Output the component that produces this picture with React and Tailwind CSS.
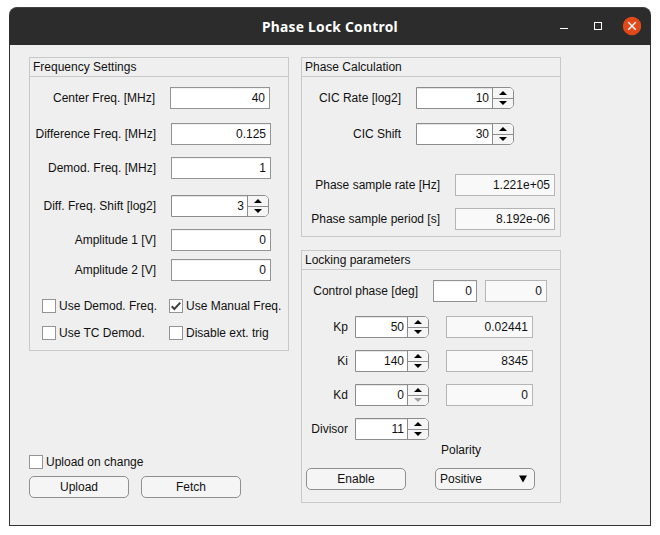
const FONT = "font-['Liberation_Sans',Arial,sans-serif]";

function Panel({ title, className, children }) {
  return (
    <section className={`w-[260px] border border-[#c9c9c9] ${className}`}>
      <h2 className="h-[19px] border-b border-[#c9c9c9] pl-[3px] leading-[18px]">{title}</h2>
      {children}
    </section>
  );
}

function Row({ label, labelWidth, gap = 'gap-[15px]', className = '', children }) {
  return (
    <div className={`flex h-[22px] items-center ${gap} ${className}`}>
      <label className={`shrink-0 text-right whitespace-nowrap ${labelWidth}`}>{label}</label>
      {children}
    </div>
  );
}

function Field({ value, width = 'w-[100px]', className = '' }) {
  return (
    <div className={`h-[22px] shrink-0 border border-[#949494] bg-white pr-1 text-right leading-[20px] shadow-[inset_0_1px_0_#f1f1f1] ${width} ${className}`}>
      {value}
    </div>
  );
}

function ReadOnly({ value, width = 'w-[100px]', className = '' }) {
  return (
    <div className={`h-[22px] shrink-0 border border-[#b5b5b5] bg-[#f9f9f9] pr-1 text-right leading-[20px] ${width} ${className}`}>
      {value}
    </div>
  );
}

function Spinner({ value, width, downDisabled = false }) {
  return (
    <div className={`flex h-[22px] shrink-0 overflow-hidden rounded-r-[5px] border border-[#8c8c8c] bg-white ${width}`}>
      <span className="flex-1 pr-[3px] text-right leading-[20px] shadow-[inset_0_1px_0_#e4e4e4]">{value}</span>
      <span className="flex w-[21px] flex-col border-l border-[#8c8c8c] bg-[#f5f5f5]">
        <span className="flex h-[11px] justify-center border-b border-[#8c8c8c] pt-[3px]">
          <svg width="8" height="4" viewBox="0 0 8 4"><path d="M0 4L4 0L8 4Z" fill="#000" /></svg>
        </span>
        <span className="flex h-[9px] justify-center pt-[2px]">
          <svg width="8" height="4" viewBox="0 0 8 4"><path d="M0 0L4 4L8 0Z" fill={downDisabled ? '#a0a0a0' : '#000'} /></svg>
        </span>
      </span>
    </div>
  );
}

function Check({ label, checked = false, className = '' }) {
  return (
    <div className={`flex h-[14px] items-center gap-[3px] whitespace-nowrap ${className}`}>
      <span className="flex size-[14px] shrink-0 items-center justify-center border border-[#949494] bg-white">
        {checked && (
          <svg width="12" height="12" viewBox="0 0 12 12">
            <path d="M1.7 6.2L4.4 9L10.3 2.6" fill="none" stroke="#3f3f3f" strokeWidth="2" />
          </svg>
        )}
      </span>
      <span>{label}</span>
    </div>
  );
}

function Button({ children }) {
  return (
    <button className="h-[22px] w-[100px] rounded-[5px] border border-[#8f8f8f] bg-[#f5f5f5] text-center leading-[20px]">
      {children}
    </button>
  );
}

function TitleBar() {
  return (
    <header className="grid h-[38px] grid-cols-[1fr_auto_1fr] items-center rounded-t-[8px] border-t border-[#424242] bg-[#2c2c2c]">
      <span />
      <h1 className="w-[136px] font-['Noto_Sans','Open_Sans',sans-serif] text-[13.8px] leading-[18px] font-bold tracking-[0.26px] whitespace-nowrap text-white">
        Phase Lock Control
      </h1>
      <div className="mb-[2px] flex h-[20px] items-start justify-end pr-[10px]">
        <span className="mt-[12px] h-px w-2 bg-white" />
        <span className="mt-[6px] ml-[26px] size-2 border border-white" />
        <svg className="ml-[19px]" width="20" height="20" viewBox="0 0 20 20">
          <circle cx="11" cy="10" r="9.2" fill="#e2491a" />
          <path d="M7.3 6.3L14.7 13.7M14.7 6.3L7.3 13.7" stroke="#fff" strokeWidth="1.4" />
        </svg>
      </div>
    </header>
  );
}

export default function App() {
  return (
    <div className="h-[535px] w-[660px] overflow-hidden bg-white pt-[7px] pl-[9px]">
      <div className={`h-[519px] w-[642px] text-[12px] text-[#111] ${FONT}`}>
        <TitleBar />
        <main className="flex h-[481px] gap-[12px] border-x border-b border-[#333] bg-[#efefef] pt-[12px] pl-[19px]">
          <div className="w-[260px]">
            <Panel title="Frequency Settings" className="h-[294px]">
              <Row label="Center Freq. [MHz]" labelWidth="w-[125px]" className="mt-[10px]"><Field value="40" /></Row>
              <Row label="Difference Freq. [MHz]" labelWidth="w-[126px]" className="mt-[14px]"><Field value="0.125" /></Row>
              <Row label="Demod. Freq. [MHz]" labelWidth="w-[126px]" className="mt-[12px]"><Field value="1" /></Row>
              <Row label="Diff. Freq. Shift [log2]" labelWidth="w-[126px]" className="mt-[16px]"><Spinner value="3" width="w-[98px]" /></Row>
              <Row label="Amplitude 1 [V]" labelWidth="w-[126px]" className="mt-[12px]"><Field value="0" /></Row>
              <Row label="Amplitude 2 [V]" labelWidth="w-[126px]" className="mt-[8px]"><Field value="0" /></Row>
              <div className="mt-[18px] grid grid-cols-[127px_1fr] gap-y-[13px] pl-[12px]">
                <Check label="Use Demod. Freq." />
                <Check label="Use Manual Freq." checked />
                <Check label="Use TC Demod." />
                <Check label="Disable ext. trig" />
              </div>
            </Panel>
            <Check label="Upload on change" className="mt-[104px]" />
            <div className="mt-[7px] flex gap-[12px]">
              <Button>Upload</Button>
              <Button>Fetch</Button>
            </div>
          </div>

          <div className="w-[260px]">
            <Panel title="Phase Calculation" className="h-[180px]">
              <Row label="CIC Rate [log2]" labelWidth="w-[99px]" className="mt-[10px]"><Spinner value="10" width="w-[98px]" /></Row>
              <Row label="CIC Shift" labelWidth="w-[99px]" className="mt-[14px]"><Spinner value="30" width="w-[98px]" /></Row>
              <Row label="Phase sample rate [Hz]" labelWidth="w-[138px]" className="mt-[29px]"><ReadOnly value="1.221e+05" /></Row>
              <Row label="Phase sample period [s]" labelWidth="w-[138px]" className="mt-[12px]"><ReadOnly value="8.192e-06" /></Row>
            </Panel>
            <Panel title="Locking parameters" className="mt-[13px] h-[253px]">
              <Row label="Control phase [deg]" labelWidth="w-[116px]" className="mt-[10px]">
                <Field value="0" width="w-[44px]" />
                <ReadOnly value="0" width="w-[62px]" className="-ml-[7px]" />
              </Row>
              <Row label="Kp" labelWidth="w-[46px]" gap="gap-[7px]" className="mt-[14px]">
                <Spinner value="50" width="w-[74px]" />
                <ReadOnly value="0.02441" width="w-[87px]" className="ml-[10px]" />
              </Row>
              <Row label="Ki" labelWidth="w-[46px]" gap="gap-[7px]" className="mt-[12px]">
                <Spinner value="140" width="w-[74px]" />
                <ReadOnly value="8345" width="w-[87px]" className="ml-[10px]" />
              </Row>
              <Row label="Kd" labelWidth="w-[46px]" gap="gap-[7px]" className="mt-[12px]">
                <Spinner value="0" width="w-[74px]" downDisabled />
                <ReadOnly value="0" width="w-[87px]" className="ml-[10px]" />
              </Row>
              <Row label="Divisor" labelWidth="w-[46px]" gap="gap-[7px]" className="mt-[12px]">
                <Spinner value="11" width="w-[74px]" />
              </Row>
              <div className="mt-[3px] ml-[139px] h-[14px] leading-[14px]">Polarity</div>
              <div className="mt-[11px] ml-[4px] flex gap-[29px]">
                <Button>Enable</Button>
                <div className="flex h-[22px] w-[100px] items-center justify-between rounded-[5px] border border-[#8f8f8f] bg-[#f5f5f5] pr-[7px] pl-1 leading-[20px]">
                  <span>Positive</span>
                  <svg width="8" height="8" viewBox="0 0 8 8"><path d="M0 0.5H8L4 7.5Z" fill="#000" /></svg>
                </div>
              </div>
            </Panel>
          </div>
        </main>
      </div>
    </div>
  );
}
